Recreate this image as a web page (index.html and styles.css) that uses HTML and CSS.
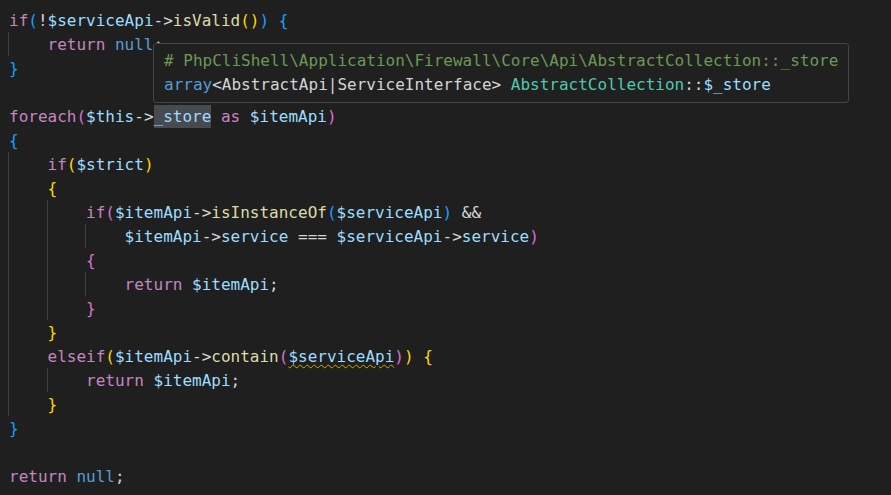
FILE: index.html
```html
<!DOCTYPE html>
<html>
<head>
<meta charset="utf-8">
<link rel="stylesheet" href="styles.css">
</head>
<body>
<div class="editor">
  <div class="ln"><span class="k">if</span><span class="b3">(</span><span class="o">!</span><span class="v">$serviceApi</span><span class="o">-&gt;</span><span class="f">isValid</span><span class="b1">()</span><span class="b3">)</span> <span class="b3">{</span></div>
  <div class="ln"><span class="g">    </span><span class="k">return</span> <span class="c">null</span><span class="o">;</span></div>
  <div class="ln"><span class="b3">}</span></div>
  <div class="ln"> </div>
  <div class="ln"><span class="k">foreach</span><span class="b2">(</span><span class="v">$this</span><span class="o">-&gt;</span><span class="v hl">_store</span> <span class="k">as</span> <span class="v">$itemApi</span><span class="b2">)</span></div>
  <div class="ln"><span class="b3">{</span></div>
  <div class="ln"><span class="g">    </span><span class="k">if</span><span class="b1">(</span><span class="v">$strict</span><span class="b1">)</span></div>
  <div class="ln"><span class="g">    </span><span class="b1">{</span></div>
  <div class="ln"><span class="g">    </span><span class="g">    </span><span class="k">if</span><span class="b2">(</span><span class="v">$itemApi</span><span class="o">-&gt;</span><span class="f">isInstanceOf</span><span class="b3">(</span><span class="v">$serviceApi</span><span class="b3">)</span><span class="o"> &amp;&amp;</span></div>
  <div class="ln"><span class="g">    </span><span class="g">    </span><span class="g">    </span><span class="v">$itemApi</span><span class="o">-&gt;</span><span class="v">service</span><span class="o"> === </span><span class="v">$serviceApi</span><span class="o">-&gt;</span><span class="v">service</span><span class="b2">)</span></div>
  <div class="ln"><span class="g">    </span><span class="g">    </span><span class="b2">{</span></div>
  <div class="ln"><span class="g">    </span><span class="g">    </span><span class="g">    </span><span class="k">return</span> <span class="v">$itemApi</span><span class="o">;</span></div>
  <div class="ln"><span class="g">    </span><span class="g">    </span><span class="b2">}</span></div>
  <div class="ln"><span class="g">    </span><span class="b1">}</span></div>
  <div class="ln"><span class="g">    </span><span class="k">elseif</span><span class="b1">(</span><span class="v">$itemApi</span><span class="o">-&gt;</span><span class="f">contain</span><span class="b2">(</span><span class="v warn">$serviceApi</span><span class="b2">)</span><span class="b1">)</span> <span class="b1">{</span></div>
  <div class="ln"><span class="g">    </span><span class="g">    </span><span class="k">return</span> <span class="v">$itemApi</span><span class="o">;</span></div>
  <div class="ln"><span class="g">    </span><span class="b1">}</span></div>
  <div class="ln"><span class="b3">}</span></div>
  <div class="ln"> </div>
  <div class="ln"><span class="k">return</span> <span class="c">null</span><span class="o">;</span></div>

  <div class="hover">
    <div class="ln"><span class="cm"># PhpCliShell\Application\Firewall\Core\Api\AbstractCollection::_store</span></div>
    <div class="ln"><span class="c">array</span><span class="o">&lt;AbstractApi|ServiceInterface&gt; </span><span class="t">AbstractCollection</span><span class="o">::</span><span class="v">$_store</span></div>
  </div>
</div>
</body>
</html>
```

FILE: styles.css
```css
html, body {
  margin: 0;
  padding: 0;
  background: #1f1f1f;
  height: 100%;
  overflow: hidden;
}

.editor {
  position: relative;
  padding: 9px 0 0 9px;
  font-family: "DejaVu Sans Mono", "Liberation Mono", monospace;
  font-size: 16px;
  color: #d4d4d4;
}

.ln {
  height: 24px;
  line-height: 24px;
  white-space: pre;
}

.g {
  position: relative;
  display: inline-block;
  height: 24px;
  vertical-align: top;
}

.g::before {
  content: "";
  position: absolute;
  left: -1px;
  top: -1px;
  bottom: 1px;
  width: 1px;
  background: #404040;
}

.k { color: #c586c0; }
.c { color: #569cd6; }
.v { color: #9cdcfe; }
.f { color: #dcdcaa; }
.o { color: #d4d4d4; }
.t { color: #4ec9b0; }
.cm { color: #6a9955; }
.b1 { color: #ffd700; }
.b2 { color: #da70d6; }
.b3 { color: #179fff; }

.hl {
  background: #474b51;
  padding: 2px 0;
}

.warn {
  text-decoration: underline wavy #cca700;
  text-decoration-thickness: 1px;
  text-underline-offset: 2px;
}

.hover {
  position: absolute;
  left: 153px;
  top: 43px;
  width: 696px;
  height: 60px;
  box-sizing: border-box;
  padding: 5px 10px 0 10px;
  background: #202020;
  border: 1px solid #454545;
  border-radius: 3px;
}
```
